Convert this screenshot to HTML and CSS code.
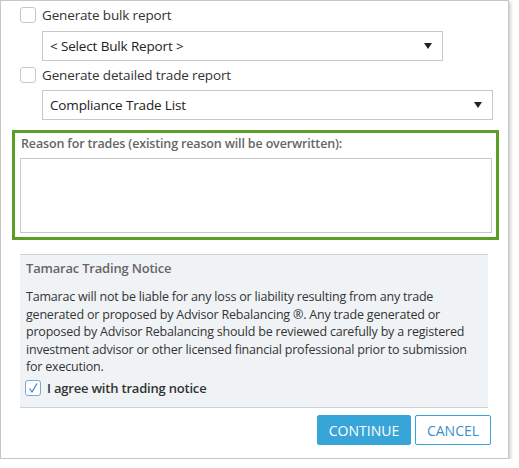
FILE: index.html
```html
<!DOCTYPE html>
<html>
<head>
<meta charset="utf-8">
<link rel="stylesheet" href="styles.css">
</head>
<body>
<div class="panel">
  <label class="check-row row1">
    <span class="box"></span>
    <span class="check-label">Generate bulk report</span>
  </label>
  <div class="select select-bulk">
    <span>&lt; Select Bulk Report &gt;</span>
    <span class="arrow"></span>
  </div>
  <label class="check-row row2">
    <span class="box"></span>
    <span class="check-label">Generate detailed trade report</span>
  </label>
  <div class="select select-trade">
    <span>Compliance Trade List</span>
    <span class="arrow"></span>
  </div>
  <div class="reason">
    <div class="reason-label">Reason for trades (existing reason will be overwritten):</div>
    <div class="textarea"></div>
  </div>
  <div class="notice">
    <div class="notice-title">Tamarac Trading Notice</div>
    <p class="notice-text">Tamarac will not be liable for any loss or liability resulting from any trade generated or proposed by Advisor Rebalancing ®. Any trade generated or proposed by Advisor Rebalancing should be reviewed carefully by a registered investment advisor or other licensed financial professional prior to submission for execution.</p>
    <label class="agree">
      <span class="box checked">
        <svg width="12" height="12" viewBox="0 0 12 12"><path d="M2.5 6.5 L5 10 L10 1.5" fill="none" stroke="#3f7fd0" stroke-width="1.2"/></svg>
      </span>
      <span class="agree-label">I agree with trading notice</span>
    </label>
  </div>
  <div class="actions">
    <button class="btn btn-primary">CONTINUE</button>
    <button class="btn btn-secondary">CANCEL</button>
  </div>
</div>
</body>
</html>
```

FILE: styles.css
```css
* { box-sizing: border-box; }
html, body { margin: 0; padding: 0; background: #fff; }
body {
  font-family: "Open Sans", "Noto Sans", sans-serif;
  font-size: 13px;
  color: #333;
}
.panel {
  width: 509px;
  height: 459px;
  border: 1px solid #c6c6c6;
  box-shadow: 2px 2px 3px rgba(0,0,0,0.18);
  display: flex;
  flex-direction: column;
  background: #fff;
}
.check-row {
  display: flex;
  align-items: center;
  height: 16px;
  padding-left: 19px;
}
.row1 { margin-top: 6px; }
.row2 { margin-top: 6px; }
.box {
  width: 16px;
  height: 16px;
  border: 1px solid #c8c8c8;
  border-radius: 3px;
  background: #fff;
  flex: none;
  display: flex;
  align-items: center;
  justify-content: center;
}
.check-label {
  margin-left: 6px;
  font-size: 13.5px;
  letter-spacing: -0.15px;
  color: #333;
}
.select {
  margin-left: 41px;
  height: 30px;
  border: 1px solid #c8c8c8;
  display: flex;
  align-items: center;
  justify-content: space-between;
  padding: 0 10px 0 7px;
  font-size: 13.5px;
  letter-spacing: -0.15px;
  color: #222;
}
.select-bulk { width: 401px; margin-top: 8px; }
.select-trade { width: 451px; margin-top: 7px; }
.arrow {
  width: 0; height: 0;
  border-left: 4px solid transparent;
  border-right: 4px solid transparent;
  border-top: 6px solid #222;
}
.reason {
  margin: 10px 0 0 11px;
  width: 487px;
  height: 110px;
  border: 3px solid #5a9e27;
  padding: 2px 4px 4px 5px;
  display: flex;
  flex-direction: column;
}
.reason-label {
  font-size: 12.5px;
  font-weight: 600;
  letter-spacing: -0.15px;
  color: #666;
  padding-left: 1px;
  height: 23px;
  line-height: 18px;
}
.textarea {
  flex: 1;
  border: 1px solid #c8c8c8;
  background: #fff;
}
.notice {
  margin: 14px 0 0 19px;
  width: 468px;
  height: 154px;
  background: #f0f3f6;
  border-top: 1px solid #cfd3d6;
  border-bottom: 1px solid #cfd3d6;
  padding: 4px 12px 0 6px;
}
.notice-title {
  font-size: 13px;
  font-weight: 600;
  letter-spacing: -0.2px;
  color: #666;
  line-height: 18px;
}
.notice-text {
  margin: 11px 0 0 0;
  font-size: 12.5px;
  letter-spacing: -0.2px;
  line-height: 17.5px;
  color: #333;
}
.agree {
  display: flex;
  align-items: center;
  margin-top: 3px;
  margin-left: -1px;
}
.box.checked { border-color: #7ea6d6; }
.agree-label {
  margin-left: 6px;
  font-size: 13px;
  font-weight: 600;
  letter-spacing: -0.2px;
  color: #333;
}
.actions {
  display: flex;
  justify-content: flex-end;
  gap: 4px;
  margin-top: 7px;
  padding-right: 17px;
}
.btn {
  height: 30px;
  font-family: "Open Sans", "Noto Sans", sans-serif;
  font-size: 14px;
  border-radius: 2px;
  padding: 0;
  cursor: pointer;
}
.btn-primary {
  width: 94px;
  background: #38a5d8;
  border: 1px solid #38a5d8;
  color: #fff;
}
.btn-secondary {
  width: 76px;
  background: #fff;
  border: 1px solid #38a5d8;
  color: #3a8fc8;
}
```
